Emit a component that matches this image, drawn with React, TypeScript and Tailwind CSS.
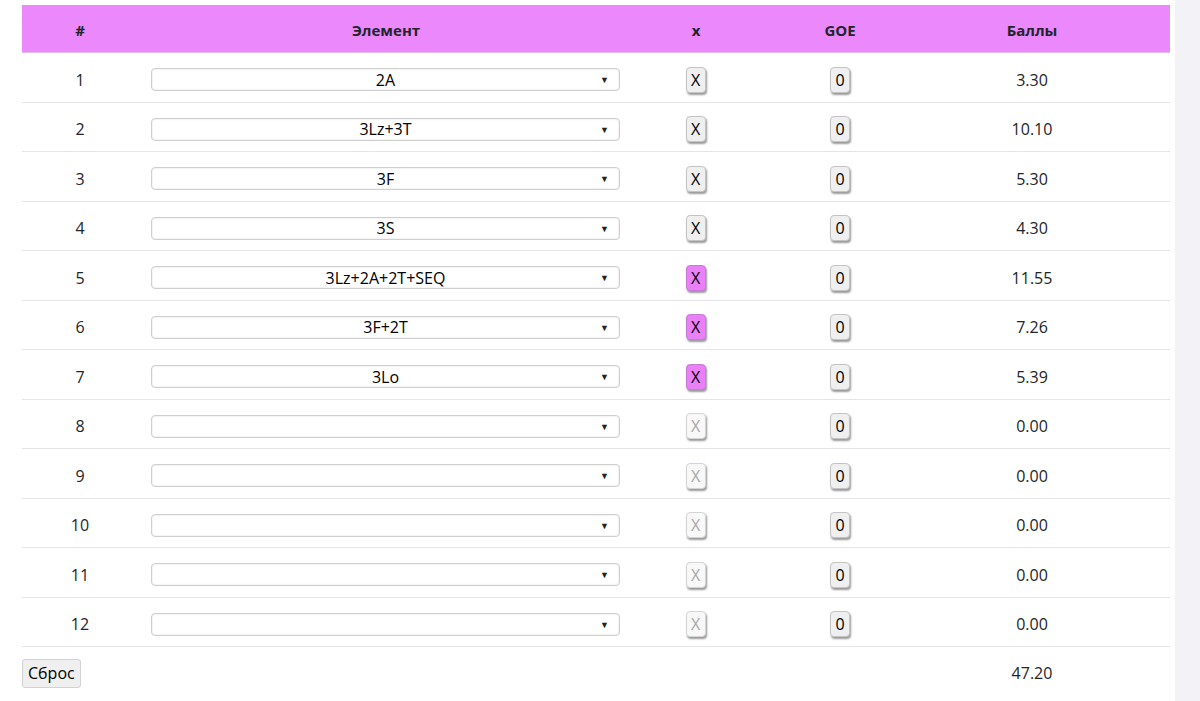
import React from 'react';

type Row = { el: string; x: 'on' | 'off' | 'dis'; score: string };

const rows: Row[] = [
  { el: '2A', x: 'off', score: '3.30' },
  { el: '3Lz+3T', x: 'off', score: '10.10' },
  { el: '3F', x: 'off', score: '5.30' },
  { el: '3S', x: 'off', score: '4.30' },
  { el: '3Lz+2A+2T+SEQ', x: 'on', score: '11.55' },
  { el: '3F+2T', x: 'on', score: '7.26' },
  { el: '3Lo', x: 'on', score: '5.39' },
  { el: '', x: 'dis', score: '0.00' },
  { el: '', x: 'dis', score: '0.00' },
  { el: '', x: 'dis', score: '0.00' },
  { el: '', x: 'dis', score: '0.00' },
  { el: '', x: 'dis', score: '0.00' },
];

const grid = 'w-[1148px] grid grid-cols-[116px_496px_124px_164px_220px_28px] items-center';

function SmallBtn({ label, variant }: { label: string; variant: 'on' | 'off' | 'dis' }) {
  const tone =
    variant === 'on'
      ? 'bg-[#ea80f8] text-black border-[#c97bd6]'
      : variant === 'dis'
      ? 'bg-[#f8f8f8] text-[#a8a8a8] border-[#d4d4d4]'
      : 'bg-[#efefef] text-black border-[#c4c4c4]';
  return (
    <div
      className={`w-[20px] h-[26px] rounded-[4px] border flex items-center justify-center text-[16px] leading-none shadow-[1px_2px_2px_rgba(0,0,0,0.4)] ${tone}`}
    >
      {label}
    </div>
  );
}

export default function App() {
  return (
    <div className="w-[1200px] h-[701px] flex bg-white text-[#212529] font-['Open_Sans',sans-serif] overflow-hidden">
      <div className="w-[1175px] pl-[22px] pt-[5px]">
        <div className={`${grid} h-[48px] pt-[4px] bg-[#ea88fc] border-b border-[#e2bde8] font-bold text-[15px]`}>
          <div className="text-center">#</div>
          <div className="text-center">Элемент</div>
          <div className="text-center">x</div>
          <div className="text-center">GOE</div>
          <div className="text-center">Баллы</div>
          <div />
        </div>
        {rows.map((r, i) => (
          <div key={i} className={`${grid} h-[49.5px] pt-[5px] border-b border-[#e4e4ea] text-[16px]`}>
            <div className="text-center">{i + 1}</div>
            <div className="pl-[13px] pr-[14px]">
              <div className="relative h-[23px] rounded-[4px] border border-[#cfcfcf] bg-white shadow-[inset_0_0_2px_rgba(0,0,0,0.15)] flex items-center justify-center text-[16px]">
                <span className="text-black">{r.el}</span>
                <span className="absolute right-[10px] top-[4px] text-[9px] text-[#222]">▼</span>
              </div>
            </div>
            <div className="flex justify-center pr-[1px]">
              <SmallBtn label="X" variant={r.x} />
            </div>
            <div className="flex justify-center">
              <SmallBtn label="0" variant="off" />
            </div>
            <div className="text-center">{r.score}</div>
            <div />
          </div>
        ))}
        <div className={`${grid} h-[52px] text-[16px]`}>
          <div>
            <button className="h-[29px] px-[5px] bg-[#efefef] border border-[#d2d2d2] rounded-[3px] text-[16px] text-black">
              Сброс
            </button>
          </div>
          <div />
          <div />
          <div />
          <div className="text-center">47.20</div>
          <div />
        </div>
      </div>
      <div className="flex-1 bg-[#f2f2f7]" />
    </div>
  );
}
